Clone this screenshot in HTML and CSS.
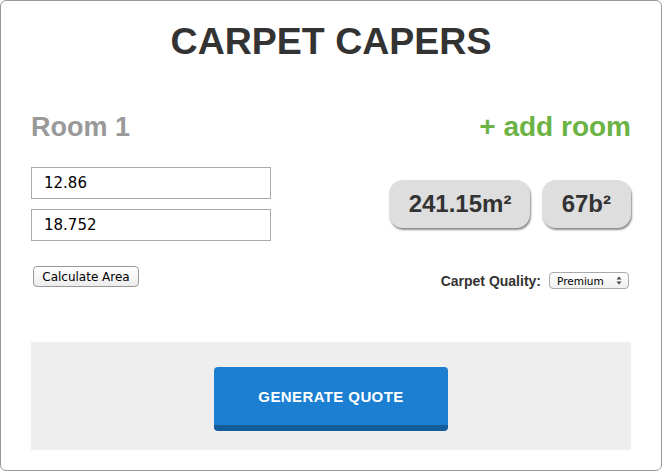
FILE: index.html
```
<!DOCTYPE html>
<html>
<head>
<meta charset="utf-8">
<title>Carpet Capers</title>
<link rel="stylesheet" href="styles.css">
</head>
<body>
<div class="frame">
  <h1 class="title">CARPET CAPERS</h1>
  <div class="room-head">
    <h2 class="room-name">Room 1</h2>
    <a class="add-room" href="#">+ add room</a>
  </div>
  <div class="fields">
    <div class="inputs">
      <input class="dim" type="text" value="12.86">
      <input class="dim" type="text" value="18.752">
    </div>
    <div class="results">
      <div class="pill pill-wide">241.15m²</div>
      <div class="pill">67b²</div>
    </div>
  </div>
  <div class="actions">
    <button class="calc" type="button">Calculate Area</button>
    <div class="quality">
      <span class="quality-label">Carpet Quality:</span>
      <div class="select">
        <span class="select-text">Premium</span>
        <svg class="select-arrows" width="6" height="9" viewBox="0 0 6 9"><path d="M3 0.5 L5.5 3.5 H0.5 Z M3 8.5 L5.5 5.5 H0.5 Z" fill="#444"/></svg>
      </div>
    </div>
  </div>
  <div class="band">
    <button class="quote" type="button">GENERATE QUOTE</button>
  </div>
</div>
</body>
</html>
```

FILE: styles.css
```
* { box-sizing: border-box; }
html, body { margin: 0; padding: 0; background: #fff; }
body { font-family: "Liberation Sans", Arial, sans-serif; }

.frame {
  width: 662px;
  height: 471px;
  border: 1px solid #999;
  border-radius: 6px;
  padding: 20px 30px 0;
}

.title {
  margin: 0;
  font-size: 37.5px;
  line-height: 40px;
  font-weight: bold;
  color: #333;
  text-align: center;
}

.room-head {
  margin-top: 50px;
  display: flex;
  justify-content: space-between;
  align-items: center;
  height: 32px;
}
.room-name {
  margin: 0;
  font-size: 27px;
  line-height: 32px;
  font-weight: bold;
  color: #999;
}
.add-room {
  font-size: 28px;
  line-height: 32px;
  font-weight: bold;
  color: #6bb344;
  text-decoration: none;
}

.fields {
  margin-top: 24px;
  display: flex;
  justify-content: space-between;
  align-items: center;
}
.inputs {
  display: flex;
  flex-direction: column;
  gap: 10px;
}
.dim {
  width: 240px;
  height: 32px;
  margin: 0;
  border: 1px solid #aaa;
  padding: 0 12px;
  font-family: "DejaVu Sans", sans-serif;
  font-size: 15px;
  color: #000;
  background: #fff;
  outline: none;
}
.results {
  display: flex;
  gap: 12px;
}
.pill {
  height: 48px;
  padding: 0 20px;
  background: #dedede;
  border-radius: 14px;
  box-shadow: 1px 2px 2px rgba(0,0,0,0.45);
  font-size: 24px;
  font-weight: bold;
  color: #333;
  line-height: 48px;
  text-align: center;
}
.pill-wide { width: 141px; }

.actions {
  margin-top: 25px;
  display: flex;
  justify-content: space-between;
  align-items: flex-start;
}
.calc {
  margin: 0 0 0 2px;
  width: 106px;
  height: 21px;
  padding: 0;
  border: 1px solid #999;
  border-radius: 4px;
  background: linear-gradient(#ffffff, #ececec);
  font-family: "DejaVu Sans", sans-serif;
  font-size: 12px;
  color: #000;
}
.quality {
  display: flex;
  align-items: center;
  gap: 8px;
  padding-top: 6px;
  margin-right: 2px;
}
.quality-label {
  font-size: 14px;
  font-weight: bold;
  color: #333;
}
.select {
  width: 80px;
  height: 17px;
  border: 1px solid #aaa;
  border-radius: 4px;
  background: linear-gradient(#ffffff, #f0f0f0);
  display: flex;
  align-items: center;
  justify-content: space-between;
  padding: 0 6px 0 7px;
}
.select-text {
  font-family: "DejaVu Sans", sans-serif;
  font-size: 10.5px;
  color: #000;
}

.band {
  margin-top: 53px;
  height: 108px;
  background: #eee;
  display: flex;
  justify-content: center;
  padding-top: 25px;
}
.quote {
  width: 234px;
  height: 64px;
  margin: 0;
  padding: 0;
  border: none;
  border-bottom: 6px solid #145d9b;
  border-radius: 4px;
  background: #1c7fd2;
  color: #fff;
  font-family: "Liberation Sans", Arial, sans-serif;
  font-size: 15px;
  font-weight: bold;
  letter-spacing: 0.4px;
}
```
